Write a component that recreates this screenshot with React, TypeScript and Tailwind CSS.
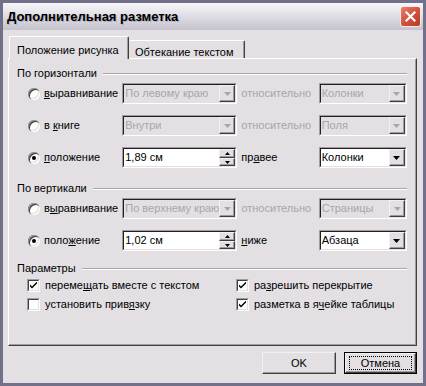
import React from "react";

const BG = "bg-[#e3dfe3]";

function Arrow({ dir = "down", disabled }: { dir?: "down" | "up"; disabled?: boolean }) {
  const fill = disabled ? "#a7a6aa" : "#000";
  return (
    <svg width="7" height="4" viewBox="0 0 7 4" className="block">
      {dir === "down" ? (
        <polygon points="0,0 7,0 3.5,4" fill={fill} />
      ) : (
        <polygon points="0,4 7,4 3.5,0" fill={fill} />
      )}
    </svg>
  );
}

function Raised({ className = "", children }: { className?: string; children?: React.ReactNode }) {
  return (
    <div
      className={`flex items-center justify-center ${BG} border border-t-[#f2f0f2] border-l-[#f2f0f2] border-r-[#404040] border-b-[#404040] shadow-[inset_-1px_-1px_0_#9c9aa0] ${className}`}
    >
      {children}
    </div>
  );
}

function Sunken({
  width,
  white,
  children,
}: {
  width: number;
  white?: boolean;
  children: React.ReactNode;
}) {
  return (
    <div
      className="flex h-[21px] border border-t-[#a09ca4] border-l-[#a09ca4] border-r-white border-b-white"
      style={{ width }}
    >
      <div
        className={`flex flex-1 items-center border border-t-[#202020] border-l-[#202020] border-r-[#e3dfe3] border-b-[#e3dfe3] ${
          white ? "bg-white" : BG
        }`}
      >
        {children}
      </div>
    </div>
  );
}

function Combo({ width, value, disabled }: { width: number; value: string; disabled?: boolean }) {
  return (
    <Sunken width={width} white={!disabled}>
      <span className={`flex-1 truncate pl-[1px] ${disabled ? "text-[#a7a6aa]" : "text-black"}`}>
        {value}
      </span>
      <Raised className="h-[17px] w-[16px]">
        <Arrow disabled={disabled} />
      </Raised>
    </Sunken>
  );
}

function Spin({ value }: { value: string }) {
  return (
    <Sunken width={116} white>
      <span className="flex-1 pl-[1px] text-black">{value}</span>
      <div className="flex h-[17px] w-[16px] flex-col">
        <Raised className="h-[9px] w-[16px]">
          <svg width="5" height="3" viewBox="0 0 5 3" className="block">
            <polygon points="0,3 5,3 2.5,0" fill="#000" />
          </svg>
        </Raised>
        <Raised className="h-[8px] w-[16px]">
          <svg width="5" height="3" viewBox="0 0 5 3" className="block">
            <polygon points="0,0 5,0 2.5,3" fill="#000" />
          </svg>
        </Raised>
      </div>
    </Sunken>
  );
}

function Radio({ checked }: { checked?: boolean }) {
  return (
    <div className="flex h-[12px] w-[12px] items-center justify-center rounded-full bg-white shadow-[inset_1px_1px_0_#a09ca4,inset_2px_2px_0_#404040,inset_-1px_-1px_0_#fff,inset_-2px_-2px_0_#e3dfe3]">
      {checked && <div className="h-[4px] w-[4px] rounded-full bg-black" />}
    </div>
  );
}

function Check({ checked }: { checked?: boolean }) {
  return (
    <div className="flex h-[13px] w-[13px] items-center justify-center border border-t-[#a09ca4] border-l-[#a09ca4] border-r-white border-b-white">
      <div className="flex h-full w-full items-center justify-center border border-t-[#404040] border-l-[#404040] border-r-[#e3dfe3] border-b-[#e3dfe3] bg-white">
        {checked && (
          <svg width="7" height="7" viewBox="0 0 7 7" className="block">
            <path d="M0 2.5 L0 4.5 L2 6.5 L7 1.5 L7 -0.5 L2 4.5 Z" fill="#000" />
          </svg>
        )}
      </div>
    </div>
  );
}

function Group({ title }: { title: string }) {
  return (
    <div className="flex h-[13px] items-center gap-[6px]">
      <span className="leading-[13px]">{title}</span>
      <div className="h-[2px] flex-1 border-t border-t-[#a7a6aa] border-b border-b-white" />
    </div>
  );
}

function Row({
  radio,
  label,
  mid,
  rel,
  relDisabled,
  right,
}: {
  radio: boolean;
  label: React.ReactNode;
  mid: React.ReactNode;
  rel: React.ReactNode;
  relDisabled?: boolean;
  right: React.ReactNode;
}) {
  return (
    <div className="flex h-[21px] items-center pl-[11px]">
      <div className="flex w-[95px] items-center gap-[4px]">
        <Radio checked={radio} />
        <span>{label}</span>
      </div>
      {mid}
      <span className={`w-[82px] pl-[4px] ${relDisabled ? "text-[#a7a6aa]" : ""}`}>{rel}</span>
      {right}
    </div>
  );
}

function CheckRow({ checked, children }: { checked?: boolean; children: React.ReactNode }) {
  return (
    <div className="flex items-center gap-[5px]">
      <Check checked={checked} />
      <span className="leading-[13px]">{children}</span>
    </div>
  );
}

export default function App() {
  return (
    <div
      className={`flex h-[386px] w-[426px] flex-col border-[3px] border-[#70708a] ${BG} text-[11px] text-black`}
      style={{ fontFamily: '"Liberation Sans", Arial, sans-serif' }}
    >
      {/* title bar */}
      <div className="flex h-[27px] items-center justify-between bg-gradient-to-b from-[#f7f7f9] via-[#dedde4] to-[#c4c3ce] pl-[4px] pr-[2px]">
        <span className="text-[13px] font-bold [text-shadow:1px_1px_0_#b0b0b8]">
          Дополнительная разметка
        </span>
        <div className="flex h-[21px] w-[21px] items-center justify-center rounded-[3px] border border-[#f4ece8] bg-gradient-to-br from-[#e88070] via-[#d4503c] to-[#b83a28]">
          <svg width="11" height="11" viewBox="0 0 11 11">
            <path d="M1.5 1.5 L9.5 9.5 M9.5 1.5 L1.5 9.5" stroke="#fff" strokeWidth="2.2" strokeLinecap="square" />
          </svg>
        </div>
      </div>

      <div className="flex flex-1 flex-col pl-[5px] pr-[6px] pt-[6px]">
        {/* tabs */}
        <div className="relative z-10 flex h-[22px] items-end pl-[1px]">
          <div className="-mb-px flex h-[23px] w-[120px] items-start rounded-t-[2px] border-t border-l border-t-white border-l-white border-r border-r-[#404040] shadow-[inset_-1px_0_0_#a09ca4] bg-[#e3dfe3] pl-[7px] pt-[5px]">
            Положение рисунка
          </div>
          <div className="flex h-[18px] w-[116px] items-start rounded-t-[2px] border-t border-t-white border-r border-r-[#404040] shadow-[inset_-1px_0_0_#a09ca4] pl-[6px] pt-[3px]">
            Обтекание текстом
          </div>
        </div>

        {/* panel */}
        <div className="flex h-[288px] flex-col border border-t-white border-l-white border-r-[#404040] border-b-[#404040] shadow-[inset_-1px_-1px_0_#a09ca4] pl-[8px] pr-[9px] pt-[8px]">
          <Group title="По горизонтали" />
          <div className="mt-[3px] flex flex-col gap-[11px]">
            <Row
              radio={false}
              label={<><u>в</u>ыравнивание</>}
              mid={<Combo width={116} value="По левому краю" disabled />}
              rel="относительно"
              relDisabled
              right={<Combo width={89} value="Колонки" disabled />}
            />
            <Row
              radio={false}
              label={<>в <u>к</u>ниге</>}
              mid={<Combo width={116} value="Внутри" disabled />}
              rel="относительно"
              relDisabled
              right={<Combo width={89} value="Поля" disabled />}
            />
            <Row
              radio
              label={<><u>п</u>оложение</>}
              mid={<Spin value="1,89 см" />}
              rel={<>пр<u>а</u>вее</>}
              right={<Combo width={89} value="Колонки" />}
            />
          </div>

          <div className="mt-[14px]">
            <Group title="По вертикали" />
          </div>
          <div className="mt-[3px] flex flex-col gap-[11px]">
            <Row
              radio={false}
              label={<>в<u>ы</u>равнивание</>}
              mid={<Combo width={116} value="По верхнему краю" disabled />}
              rel="относительно"
              relDisabled
              right={<Combo width={89} value="Страницы" disabled />}
            />
            <Row
              radio
              label={<>поло<u>ж</u>ение</>}
              mid={<Spin value="1,02 см" />}
              rel={<><u>н</u>иже</>}
              right={<Combo width={89} value="Абзаца" />}
            />
          </div>

          <div className="mt-[11px]">
            <Group title="Параметры" />
          </div>
          <div className="mt-[4px] grid grid-cols-[209px_1fr] gap-y-[6px] pl-[10px]">
            <CheckRow checked>
              переме<u>щ</u>ать вместе с текстом
            </CheckRow>
            <CheckRow checked>
              ра<u>з</u>решить перекрытие
            </CheckRow>
            <CheckRow>
              установить прив<u>я</u>зку
            </CheckRow>
            <CheckRow checked>
              разметка в я<u>ч</u>ейке таблицы
            </CheckRow>
          </div>
        </div>

        {/* buttons */}
        <div className="mt-[6px] flex justify-end gap-[8px]">
          <Raised className="h-[22px] w-[74px]">OK</Raised>
          <div className="h-[22px] w-[73px] border border-black">
            <Raised className="h-full w-full">
              <div className="flex h-[14px] w-[63px] items-center justify-center border border-dotted border-black">
                Отмена
              </div>
            </Raised>
          </div>
        </div>
      </div>
    </div>
  );
}
